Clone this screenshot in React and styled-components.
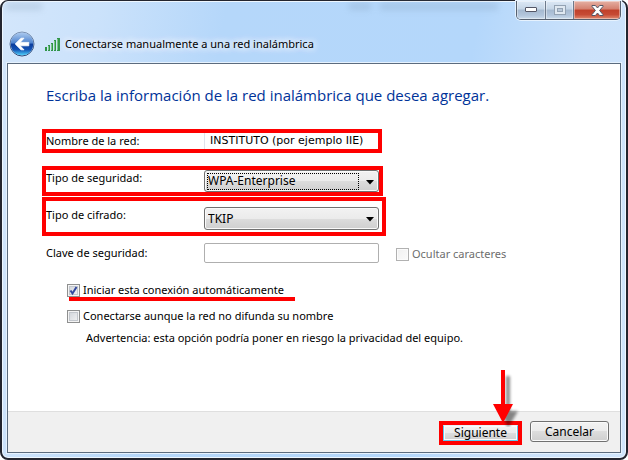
import React, { useState } from "react";
import styled, { createGlobalStyle } from "styled-components";

const GlobalStyle = createGlobalStyle`
  * {
    box-sizing: border-box;
  }
  body {
    margin: 0;
    background: #fff;
    color: #000;
    font-family: "Noto Sans", "Open Sans", sans-serif;
    font-size: 11px;
    line-height: 18px;
  }
  button, input, select {
    font: inherit;
    color: inherit;
    margin: 0;
  }
`;

const Window = styled.main`
  position: relative;
  display: flex;
  flex-direction: column;
  min-height: 100vh;
  padding: 0 5px 5px;
  border: 2px solid #23252f;
  border-top-width: 1px;
  border-radius: 8px;
  background: linear-gradient(
    100deg,
    #d3e6fb 0%,
    #cbe2fb 14%,
    #b5d7fa 32%,
    #b4d7fb 68%,
    #cce2fb 84%,
    #d0e5fc 100%
  );
  box-shadow: inset 0 0 0 1px #eef7ff;
`;

const TitleBar = styled.header`
  display: flex;
  flex-direction: column;
  height: 62px;
`;

const CaptionButtons = styled.div`
  display: flex;
  align-self: flex-end;
  height: 19px;
  border: 1px solid #56606f;
  border-top: 0;
  border-radius: 0 0 5px 5px;
  box-shadow: 0 0 0 1px #e6f2fe;
  overflow: hidden;
`;

const CaptionButton = styled.button`
  display: flex;
  align-items: center;
  justify-content: center;
  width: ${props => (props.$close ? "47px" : "28px")};
  padding: 0;
  border: 0;
  border-left: ${props => (props.$first ? "0" : "1px solid #6d7a8c")};
  background: ${props =>
    props.$close
      ? "linear-gradient(#e5b1a4 0%, #d4806f 45%, #c0402a 50%, #c64a34 75%, #e08a70 100%)"
      : "linear-gradient(#dce8f5 0%, #c5d5e6 45%, #a5b9d0 50%, #b3c6dc 80%, #cbdcec 100%)"};
  box-shadow: inset 0 0 0 1px rgba(255, 255, 255, 0.4);
`;

const TitleRow = styled.div`
  display: flex;
  align-items: center;
  height: 28px;
  margin-top: 10px;
  padding-left: 2px;
`;

const BackButton = styled.button`
  display: flex;
  width: 26px;
  height: 26px;
  padding: 0;
  border: 0;
  background: none;
`;

const SignalIcon = styled.svg`
  margin: 0 5px 0 10px;
`;

const Title = styled.h1`
  margin: 0;
  font-size: 11px;
  font-weight: 400;
  text-shadow: 0 0 6px #fff, 0 0 8px #fff, 0 0 10px #fff;
`;

/* what shows through the glass from the window behind */
const Smudge = styled.div`
  position: absolute;
  top: 2px;
  left: ${props => props.$left};
  width: ${props => props.$width};
  height: 7px;
  background: #7892ad;
  opacity: 0.25;
  filter: blur(3px);
`;

const Page = styled.form`
  display: flex;
  flex: 1;
  flex-direction: column;
  border: 1px solid #5b6b7e;
  background: #fff;
  box-shadow: 0 0 0 1px #e6f2fe;
`;

const Content = styled.section`
  flex: 1;
  padding: 20px 16px 20px 34px;
`;

const Heading = styled.h2`
  margin: 0 0 23px 4px;
  color: #003399;
  font-family: "Open Sans", "Noto Sans", sans-serif;
  font-size: 15px;
  font-weight: 400;
  line-height: 22px;
`;

const Row = styled.div`
  display: flex;
  align-items: ${props => (props.$marked ? "flex-start" : "center")};
  width: fit-content;
  height: ${props => props.$height};
  margin-top: ${props => props.$gap || "0"};
  padding: ${props => props.$pad || "0"};
  border: 4px solid ${props => (props.$marked ? "#ff0000" : "transparent")};
`;

const Label = styled.label`
  width: 158px;
  line-height: 16px;
  white-space: nowrap;
`;

const NameInput = styled.input`
  width: 174px;
  height: 16px;
  padding: 0 0 0 5px;
  border: 0;
  border-left: 1px solid #dfe3ec;
  background: #fff;
  font-family: "DejaVu Sans", sans-serif;
  outline: none;
`;

const KeyInput = styled.input`
  width: 175px;
  height: 20px;
  padding: 0 4px;
  border: 1px solid #afafaf;
  border-radius: 2px;
  background: #fff;
`;

const SelectBox = styled.div`
  position: relative;
  width: 175px;
  margin-right: ${props => props.$space || "0"};
`;

const Select = styled.select`
  display: block;
  appearance: none;
  width: 100%;
  height: ${props => (props.$focused ? "22px" : "23px")};
  padding: 0 20px 0 3px;
  border: 1px solid #707070;
  border-radius: 3px;
  background: linear-gradient(#f2f2f2 0%, #ebebeb 50%, #dddddd 50%, #cfcfcf 100%);
  box-shadow: inset 0 0 0 1px #fafafa;
  font-size: 12px;
  outline: none;
`;

const SelectArrow = styled.svg`
  position: absolute;
  top: 10px;
  right: 5px;
  pointer-events: none;
`;

const FocusRect = styled.span`
  position: absolute;
  inset: 3px 20px 2px 3px;
  border: 1px dotted #000;
  pointer-events: none;
`;

const Check = styled.label`
  position: relative;
  display: flex;
  align-items: center;
  width: fit-content;
  gap: 3px;
  margin: ${props => props.$margin || "0"};
  color: ${props => (props.$disabled ? "#6d6d6d" : "#000")};
  white-space: nowrap;
`;

const CheckBox = styled.input`
  appearance: none;
  flex: none;
  width: 13px;
  height: 13px;
  border: 1px solid #8e8f8f;
  background: linear-gradient(135deg, #cdd1d7, #f6f6f6);
  box-shadow: inset 0 0 0 1px #f4f4f4, inset 0 0 0 2px #c3c7cd;

  &:disabled {
    border-color: #b1b1b1;
    background: linear-gradient(135deg, #f0f0f0, #fafafa);
    box-shadow: inset 0 0 0 1px #fbfbfb;
  }
`;

const CheckMark = styled.svg`
  position: absolute;
  top: 3px;
  left: 0;
  pointer-events: none;
`;

const Underline = styled.span`
  position: absolute;
  left: 2px;
  right: -11px;
  bottom: -2px;
  height: 4px;
  background: #ff0000;
`;

const Warning = styled.p`
  margin: 4px 0 0 44px;
`;

const Footer = styled.footer`
  display: flex;
  justify-content: flex-end;
  height: 41px;
  padding: 9px 11px 0 0;
  gap: 8px;
  border-top: 1px solid #dfdfdf;
  background: #f0f0f0;
`;

const MarkedButton = styled.div`
  position: relative;
  display: flex;
  width: 83px;
  height: 24px;
  border: 4px solid #ff0000;
`;

const Button = styled.button`
  width: ${props => (props.$primary ? "100%" : "79px")};
  height: ${props => (props.$primary ? "16px" : "21px")};
  padding: 0;
  border: 1px solid ${props => (props.$primary ? "#5fc8ee" : "#707070")};
  border-top-color: ${props => (props.$primary ? "#e8f2f6" : "#707070")};
  border-radius: ${props => (props.$primary ? "0" : "3px")};
  background: linear-gradient(#f2f2f2 0%, #ebebeb 50%, #dddddd 50%, #cfcfcf 100%);
  box-shadow: inset 0 0 0 1px #fafafa;
  font-size: 12px;
  line-height: 14px;
`;

const Pointer = styled.svg`
  position: absolute;
  top: -56px;
  left: 48px;
  pointer-events: none;
`;

const Dropdown = ({ id, value, focused, space }) => (
  <SelectBox $space={space}>
    <Select id={id} defaultValue={value} $focused={focused}>
      <option>{value}</option>
    </Select>
    {focused && <FocusRect />}
    <SelectArrow width="8" height="5" viewBox="0 0 8 5">
      <path d="M0 0h8L4 4.5z" fill="#000" />
    </SelectArrow>
  </SelectBox>
);

const BackArrow = () => (
  <svg width="26" height="26" viewBox="0 0 26 26">
    <defs>
      <linearGradient id="orb" x1="0" y1="0" x2="0" y2="1">
        <stop offset="0" stopColor="#a9c8ee" />
        <stop offset="0.46" stopColor="#4d83cf" />
        <stop offset="0.5" stopColor="#0b3c9c" />
        <stop offset="0.75" stopColor="#1252b4" />
        <stop offset="1" stopColor="#4fd0fb" />
      </linearGradient>
      <linearGradient id="ring" x1="0" y1="0" x2="0" y2="1">
        <stop offset="0" stopColor="#7d94b4" />
        <stop offset="1" stopColor="#2c4674" />
      </linearGradient>
    </defs>
    <circle cx="13" cy="13" r="12" fill="#a9c6ea" stroke="url(#ring)" />
    <circle cx="13" cy="13" r="11.2" fill="url(#orb)" />
    <path
      d="M6.2 13L12 7.2H15L11.2 11.4H19.8V14.8H11.2L15 18.8H12Z"
      fill="#fff"
      stroke="#fff"
      strokeWidth="0.8"
      strokeLinejoin="round"
    />
  </svg>
);

const Signal = () => (
  <SignalIcon width="15" height="13" viewBox="0 0 15 13">
    <g fill="#2f9447">
      <rect x="0" y="9" width="2" height="4" />
      <rect x="3" y="7" width="2" height="6" />
      <rect x="6" y="5" width="2" height="8" />
      <rect x="9" y="2" width="2" height="11" />
      <rect x="12" y="0" width="3" height="13" />
    </g>
    <g fill="#7cc588">
      <rect x="3" y="8" width="1" height="4" />
      <rect x="6" y="6" width="1" height="6" />
      <rect x="9" y="3" width="1" height="9" />
      <rect x="12" y="1" width="1" height="11" />
    </g>
  </SignalIcon>
);

const App = () => {
  const [autoConnect, setAutoConnect] = useState(true);

  return (
    <>
      <GlobalStyle />
      <Window>
        <Smudge $left="4px" $width="36px" />
        <Smudge $left="347px" $width="22px" />
        <Smudge $left="378px" $width="118px" />
        <TitleBar>
          <CaptionButtons>
            <CaptionButton $first aria-label="Minimizar">
              <svg width="12" height="6" viewBox="0 0 12 6">
                <rect x="0.5" y="0.5" width="11" height="4" rx="0.5" fill="#fff" stroke="#535666" />
              </svg>
            </CaptionButton>
            <CaptionButton aria-label="Maximizar" disabled>
              <svg width="12" height="10" viewBox="0 0 12 10">
                <rect x="0.5" y="0.5" width="11" height="9" fill="#dfe8f1" stroke="#93a2b3" />
                <rect x="3.5" y="3.5" width="5" height="3" fill="#b9c8d9" stroke="#93a2b3" />
              </svg>
            </CaptionButton>
            <CaptionButton $close aria-label="Cerrar">
              <svg width="13" height="11" viewBox="0 0 13 11">
                <path
                  d="M1 .5H4.4L6.5 3 8.6.5H12V1.4L8.6 5.5 12 9.6V10.5H8.6L6.5 8 4.4 10.5H1V9.6L4.4 5.5 1 1.4Z"
                  fill="#fff"
                  stroke="#535666"
                />
              </svg>
            </CaptionButton>
          </CaptionButtons>
          <TitleRow>
            <BackButton aria-label="Atrás">
              <BackArrow />
            </BackButton>
            <Signal />
            <Title>Conectarse manualmente a una red inalámbrica</Title>
          </TitleRow>
        </TitleBar>

        <Page onSubmit={e => e.preventDefault()}>
          <Content>
            <Heading>Escriba la información de la red inalámbrica que desea agregar.</Heading>
            <Row $height="24px" $marked>
              <Label htmlFor="name">Nombre de la red:</Label>
              <NameInput id="name" defaultValue="INSTITUTO (por ejemplo IIE)" />
            </Row>
            <Row $height="30px" $gap="13px" $marked>
              <Label htmlFor="security">Tipo de seguridad:</Label>
              <Dropdown id="security" value="WPA-Enterprise" focused />
            </Row>
            <Row $height="39px" $gap="1px" $pad="6px 0 0" $marked>
              <Label htmlFor="cipher">Tipo de cifrado:</Label>
              <Dropdown id="cipher" value="TKIP" space="3px" />
            </Row>
            <Row $height="28px" $gap="3px">
              <Label htmlFor="key">Clave de seguridad:</Label>
              <KeyInput id="key" />
              <Check $disabled $margin="2px 0 0 17px">
                <CheckBox type="checkbox" disabled />
                Ocultar caracteres
              </Check>
            </Row>

            <Check $margin="14px 0 0 25px">
              <CheckBox
                type="checkbox"
                checked={autoConnect}
                onChange={e => setAutoConnect(e.target.checked)}
              />
              {autoConnect && (
                <CheckMark width="13" height="13" viewBox="0 0 13 13">
                  <path d="M3.5 6.5L5.5 9.5L9.5 3" fill="none" stroke="#31479e" strokeWidth="2" />
                </CheckMark>
              )}
              Iniciar esta conexión automáticamente
              <Underline />
            </Check>
            <Check $margin="8px 0 0 25px">
              <CheckBox type="checkbox" />
              Conectarse aunque la red no difunda su nombre
            </Check>
            <Warning>
              Advertencia: esta opción podría poner en riesgo la privacidad del equipo.
            </Warning>
          </Content>

          <Footer>
            <MarkedButton>
              <Button $primary type="submit">Siguiente</Button>
              <Pointer width="32" height="58" viewBox="0 0 32 58">
                <defs>
                  <filter id="soft" x="-50%" y="-50%" width="200%" height="200%">
                    <feGaussianBlur stdDeviation="1.5" />
                  </filter>
                </defs>
                <path
                  d="M15 7H19V42H27L17 59L10 42H15Z"
                  fill="#000"
                  opacity="0.45"
                  filter="url(#soft)"
                />
                <path d="M10 1H14V35H22L12 54L2 35H10Z" fill="#ff0000" />
              </Pointer>
            </MarkedButton>
            <Button type="button">Cancelar</Button>
          </Footer>
        </Page>
      </Window>
    </>
  );
};

export default App;
